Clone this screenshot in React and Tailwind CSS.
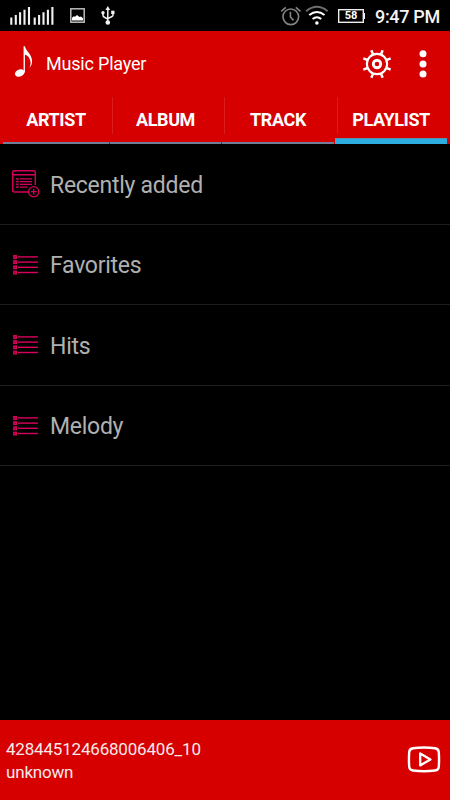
import React from 'react';

// ── Data ───────────────────────────────────────────────────────
const tabs = ['ARTIST', 'ALBUM', 'TRACK', 'PLAYLIST'];

const playlists = [
  { name: 'Recently added', recent: true },
  { name: 'Favorites' },
  { name: 'Hits' },
  { name: 'Melody' },
];

// ── Status Bar Icons ───────────────────────────────────────────
const SignalIcon = () => (
  <svg className="w-[44px] h-[18px]" viewBox="10 7 44 18" stroke="#f2f2f2" strokeWidth="2.1">
    <path d="M11.3 17.5V24.7M15.8 15V24.7M20.1 12.3V24.7M24.5 9.7V24.7M29 7V24.7" />
    <path d="M34.7 17.5V24.7M39.1 15V24.7M43.5 12.3V24.7M47.9 9.7V24.7M52.4 7V24.7" />
  </svg>
);

const PictureIcon = () => (
  <svg className="w-[15px] h-[15px]" viewBox="0 0 15 15">
    <rect x="0.8" y="0.8" width="13.4" height="13.4" fill="none" stroke="#bcbcbc" strokeWidth="1.5" />
    <path d="M2 12.5V9.8L3.8 8.3L5 8.8L7 6.9L9.5 9L11 8.6L13 10.2V12.5Z" fill="#fff" />
  </svg>
);

const UsbIcon = () => (
  <svg className="w-[14px] h-[19px]" viewBox="0 0 14 19" fill="none" stroke="#f2f2f2" strokeWidth="1.5">
    <path d="M6.8 17V2.5M2 7V9.5Q2 10.5 3 11L6.8 13.2M12 6.5V9Q12 10 11 10.5L6.8 12.7" />
    <path d="M6.8 0L9.2 4H4.4Z" fill="#f2f2f2" stroke="none" />
    <circle cx="2" cy="6.8" r="1.7" fill="#f2f2f2" stroke="none" />
    <rect x="10.2" y="4.7" width="3.3" height="3.3" fill="#f2f2f2" stroke="none" />
    <circle cx="6.8" cy="16.5" r="2.3" fill="#f2f2f2" stroke="none" />
  </svg>
);

const AlarmIcon = () => (
  <svg className="w-[22px] h-[20px]" viewBox="0 0 22 20" fill="none" stroke="#858585" strokeWidth="1.6">
    <circle cx="10.8" cy="10.8" r="7.8" />
    <path d="M10.4 5.8V11L13.5 14.4M1.2 5.4L5.8 1.4M15.8 1.4L20.5 5.4" />
  </svg>
);

const WifiIcon = () => (
  <svg className="w-[24px] h-[21px]" viewBox="0 0 24 21" fill="none" strokeWidth="2">
    <path d="M1.2 6.2Q11.9 -2.6 22.6 6.2" stroke="#6e6e6e" />
    <path d="M4.3 10.1Q11.9 3.9 19.5 10.1M7.6 14Q11.9 10.4 16.2 14" stroke="#fff" />
    <circle cx="11.9" cy="18" r="1.8" fill="#fff" />
  </svg>
);

const Battery = () => (
  <div className="flex items-center">
    <div className="w-[26px] h-[14px] border border-[#eee] ring-[0.5px] ring-inset ring-[#bbb] flex items-center justify-center text-[11px] leading-none font-bold text-white">
      58
    </div>
    <div className="w-px h-[6px] bg-[#eee]" />
  </div>
);

// ── App Icons ──────────────────────────────────────────────────
const NoteIcon = () => (
  <svg className="w-[18px] h-[32px]" viewBox="0 0 18 32">
    <ellipse cx="4.7" cy="27" rx="4.9" ry="3.6" transform="rotate(-22 4.7 27)" fill="#fff" />
    <path d="M8.6 0.3H10C10.4 4.5 17.1 8.5 17.1 15.2C17.1 17.8 16 20.2 14.4 21.7C15.7 19.2 16 16.4 15 13.8C14 11.2 12 9.1 9.9 8.6V26.5H8.6Z" fill="#fff" />
  </svg>
);

const GearIcon = () => (
  <svg className="w-[30px] h-[30px]" viewBox="-15 -15 30 30" fill="none" stroke="#fff">
    <circle r="10.1" strokeWidth="2.1" />
    <circle r="3.7" strokeWidth="2.9" />
    {[22.5, 67.5, 112.5, 157.5, 202.5, 247.5, 292.5, 337.5].map((angle) => (
      <path key={angle} d="M0 -10V-14.8" strokeWidth="2.5" transform={`rotate(${angle})`} />
    ))}
  </svg>
);

const MoreIcon = () => (
  <svg className="w-[8px] h-[28px]" viewBox="0 0 8 28" fill="#fff">
    <circle cx="4" cy="3.7" r="3.5" />
    <circle cx="4" cy="13.9" r="3.5" />
    <circle cx="4" cy="24.1" r="3.5" />
  </svg>
);

const RecentIcon = () => (
  <svg className="w-[28px] h-[28px]" viewBox="0 0 28 28" fill="none" stroke="#d5005b">
    <path d="M16 22H2.2Q0.7 22 0.7 20.5V2.2Q0.7 0.7 2.2 0.7H21.8Q23.3 0.7 23.3 2.2V15M0.7 4.8H23.3" strokeWidth="1.4" />
    <path d="M4.2 8.8H6.5M4.2 11.6H6.5M4.2 14.4H6.5M4.2 17.2H6.5" strokeWidth="1.7" />
    <path d="M8 8.8H20M8 11.6H20M8 14.4H20M8 17.2H15.5" strokeWidth="1.3" />
    <circle cx="21.7" cy="21.7" r="5.1" strokeWidth="1.3" />
    <path d="M18.9 21.7H24.5M21.7 18.9V24.5" strokeWidth="1.3" />
  </svg>
);

const ListIcon = () => (
  <svg className="w-[26px] h-[20px]" viewBox="0 0 26 20" fill="none" stroke="#d9005d">
    {[1.9, 7.1, 12.3, 17.5].map((y) => (
      <g key={y}>
        <rect x="0.9" y={y - 1.1} width="2.3" height="2.3" strokeWidth="1.6" />
        <path d={`M5 ${y}H25`} strokeWidth="1.4" />
      </g>
    ))}
  </svg>
);

const PlayIcon = () => (
  <svg className="w-[34px] h-[28px]" viewBox="0 0 34 28" fill="none" stroke="#fff">
    <path d="M6 2.3Q17 0.7 28 2.3Q31.6 2.8 31.8 6.2Q32.3 13.8 31.8 20.8Q31.6 24 28 24.5Q17 26 6 24.5Q2.4 24 2.2 20.8Q1.7 13.8 2.2 6.2Q2.4 2.8 6 2.3Z" strokeWidth="2.4" />
    <path d="M13.2 7.4V19.4L23.4 13.4Z" strokeWidth="2.3" strokeLinejoin="round" />
  </svg>
);

const App = () => {
  const activeTab = 'PLAYLIST';

  return (
    <div className="w-[450px] h-[800px] bg-black flex flex-col overflow-hidden font-['Roboto',sans-serif]">

      {/* ── Status Bar ───────────────────────────────────────── */}
      <div className="h-[31px] shrink-0 flex items-center pl-[10px] pr-[10px]">
        <SignalIcon />
        <div className="ml-4"><PictureIcon /></div>
        <div className="ml-4"><UsbIcon /></div>
        <div className="ml-auto"><AlarmIcon /></div>
        <div className="ml-[3px]"><WifiIcon /></div>
        <div className="ml-[9px] mr-[10px]"><Battery /></div>
        <span className="text-[18px] tracking-[-0.3px] font-medium leading-none text-[#f4f4f4] pt-[2px] whitespace-nowrap">9:47 PM</span>
      </div>

      {/* ── Header ───────────────────────────────────────────── */}
      <header className="h-[65px] shrink-0 bg-[#d60000] flex items-center pl-[15px] pr-[23px]">
        <div className="mb-[4px]"><NoteIcon /></div>
        <h1 className="ml-[13px] text-[18px] tracking-[-0.2px] leading-none text-white">Music Player</h1>
        <div className="ml-auto"><GearIcon /></div>
        <div className="ml-[27px]"><MoreIcon /></div>
      </header>

      {/* ── Tabs ─────────────────────────────────────────────── */}
      <nav className="h-[48px] shrink-0 bg-[#d60000] grid grid-cols-[106px_111px_112px_112px] gap-x-px pl-[3px]">
        {tabs.map((tab, i) => (
          <div key={tab} className="flex flex-col">
            <div className="h-[42px] flex">
              {i > 0 && <div className="w-px h-[37px] ml-[2px] mt-px -mr-[3px] bg-[#db1c1c]" />}
              <div className="flex-1 h-[47px] shrink-0 flex items-center justify-center text-[18px] tracking-[-0.4px] font-bold text-white">
                {tab}
              </div>
            </div>
            <div className={tab === activeTab ? 'h-[6px] bg-[#2daee0] border-t border-[#5b8fb0]' : 'mt-[4px] h-[2px] bg-[#6f7f98]'} />
          </div>
        ))}
      </nav>

      {/* ── Playlists ────────────────────────────────────────── */}
      <main className="flex-1">
        {playlists.map((item) => (
          <div key={item.name} className="h-[80.5px] border-b border-[#1c1c1c] flex items-center pl-3">
            <div className="w-[38px]">
              {item.recent ? <RecentIcon /> : <div className="pl-px pt-px"><ListIcon /></div>}
            </div>
            <span className="pt-[3px] text-[23px] tracking-[-0.27px] leading-none text-[#b0b0b0]">{item.name}</span>
          </div>
        ))}
      </main>

      {/* ── Now Playing ──────────────────────────────────────── */}
      <footer className="h-[80px] shrink-0 bg-[#d60000] flex items-center justify-between pl-[6px] pr-[9px]">
        <div className="pt-[2px] text-[17px] tracking-[-0.19px] leading-[23px] text-[#f6eaea]">
          <p>428445124668006406_10</p>
          <p>unknown</p>
        </div>
        <PlayIcon />
      </footer>
    </div>
  );
};

export default App;
